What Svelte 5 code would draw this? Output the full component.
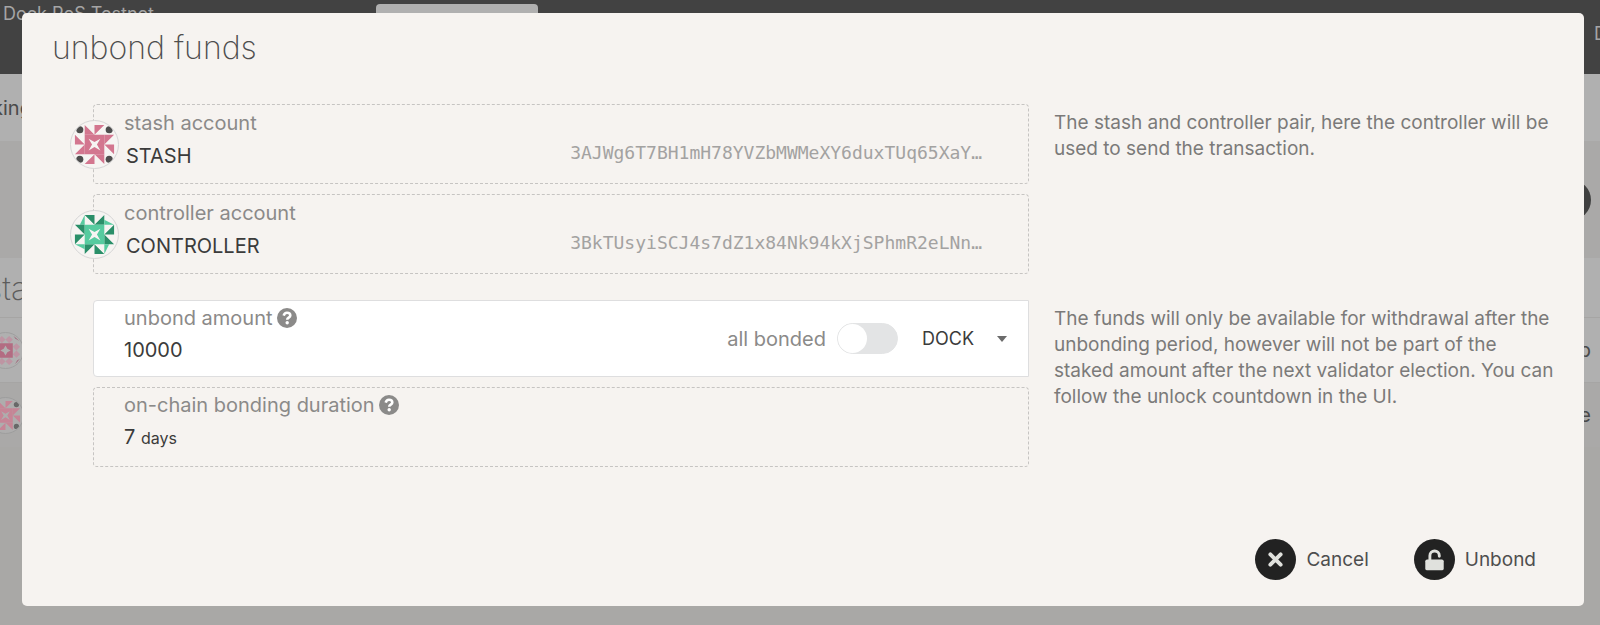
<script lang="ts">
  type Icon = 'pink' | 'green' | 'rose'
  type Account = { label: string; name: string; address: string; icon: Icon }

  const accounts: Account[] = [
    {
      label: 'stash account',
      name: 'STASH',
      address: '3AJWg6T7BH1mH78YVZbMWMeXY6duxTUq65XaY…',
      icon: 'pink',
    },
    {
      label: 'controller account',
      name: 'CONTROLLER',
      address: '3BkTUsyiSCJ4s7dZ1x84Nk94kXjSPhmR2eLNn…',
      icon: 'green',
    },
  ]

  const TURNS = [0, 90, 180, 270]
  const FILLS: Record<Icon, string> = { pink: '#d3768f', green: '#56cb9f', rose: '#b5506f' }

  let amount = $state('10000')
  let allBonded = $state(false)
  let unit = $state('DOCK')
</script>

{#snippet identicon(kind: Icon)}
  <svg class="identicon" viewBox="-4 -4 48 48" aria-hidden="true">
    {#each TURNS as turn}
      <g transform="rotate({turn} 20 20)">
        {#if kind === 'pink'}
          <path fill="#d3768f" d="M10 0v10h10zM20 0h10l-10 10z" />
          <ellipse cx="5" cy="5" rx="3.6" ry="3.6" fill="#4d4d4d" />
        {:else if kind === 'green'}
          <path fill="#2a8f69" d="M10 0h10v10zM30 0v10h-10z" />
          <path fill="#56cb9f" d="M10 0v10H5z" />
        {:else}
          <path fill="#c58a9e" d="M15 0l5 5l-5 5l-5-5zM25 0l5 5l-5 5l-5-5z" />
          <path fill="#8f1f45" d="M31 0l8 7l-5-3z" />
        {/if}
      </g>
    {/each}
    {#if kind === 'rose'}
      <path
        fill={FILLS[kind]}
        fill-rule="evenodd"
        d="M10 10h20v20h-20zM20 13L17.500 17.500L13 20L17.500 22.500L20 27L22.500 22.500L27 20L22.500 17.500z"
      />
    {:else}
      <path
        fill={FILLS[kind]}
        fill-rule="evenodd"
        d="M10 10h20v20h-20zM14 14L17.500 20L14 26L20 22.500L26 26L22.500 20L26 14L20 17.500z"
      />
    {/if}
  </svg>
{/snippet}

{#snippet help()}
  <svg class="help" viewBox="0 0 20 20" aria-hidden="true">
    <circle cx="10" cy="10" r="10" fill="#8b8a89" />
    <path
      d="M6.700 7.600C7.200 5.500 8.500 4.700 10 4.700c1.900 0 3.300 1.100 3.300 2.700 0 2.200-3.100 2.300-3.100 4.300"
      fill="none"
      stroke="#fff"
      stroke-width="2.600"
    />
    <circle cx="10.200" cy="14.800" r="1.700" fill="#fff" />
  </svg>
{/snippet}

<div class="page">
  <header class="topbar">
    <span class="chain">Dock PoS Testnet</span>
    <span class="tab"></span>
    <span class="menu">Developer</span>
  </header>
  <div class="subnav"><span>king</span></div>
  <div class="actions"><span class="dot"></span></div>
  <div class="stashes"><span>stashes</span></div>
  <div class="row">{@render identicon('rose')}<span>p</span></div>
  <div class="row alt">{@render identicon('pink')}<span>e</span></div>
</div>

<div class="modal" role="dialog" aria-labelledby="title">
  <h1 id="title">unbond funds</h1>

  <div class="columns">
    <div class="fields">
      {#each accounts as account}
        <div class="box account">
          {@render identicon(account.icon)}
          <div class="who">
            <span class="label">{account.label}</span>
            <span class="name">{account.name}</span>
          </div>
          <span class="address">{account.address}</span>
        </div>
      {/each}
    </div>
    <p>The stash and controller pair, here the controller will be used to send the transaction.</p>
  </div>

  <div class="columns">
    <div class="fields">
      <div class="box amount">
        <div class="entry">
          <label class="label" for="amount">unbond amount {@render help()}</label>
          <input id="amount" type="text" bind:value={amount} />
        </div>
        <label class="toggle">
          all bonded
          <input type="checkbox" bind:checked={allBonded} />
        </label>
        <div class="unit">
          <select aria-label="unit" bind:value={unit}>
            <option>DOCK</option>
          </select>
          <svg viewBox="0 0 10 6" aria-hidden="true"><path d="M0 0h10L5 6z" fill="#6b6b6b" /></svg>
        </div>
      </div>
      <div class="box duration">
        <span class="label">on-chain bonding duration {@render help()}</span>
        <span class="value">7 <small>days</small></span>
      </div>
    </div>
    <p>
      The funds will only be available for withdrawal after the unbonding period, however will not
      be part of the staked amount after the next validator election. You can follow the unlock
      countdown in the UI.
    </p>
  </div>

  <footer>
    <button type="button">
      <svg viewBox="0 0 40 40" aria-hidden="true">
        <circle cx="20" cy="20" r="20" fill="#222" />
        <path
          d="M15 15l10 10M25 15l-10 10"
          stroke="#e0e1dd"
          stroke-width="3.800"
          stroke-linecap="round"
        />
      </svg>
      Cancel
    </button>
    <button type="button">
      <svg viewBox="0 0 40 40" aria-hidden="true">
        <circle cx="20" cy="20" r="20" fill="#222" />
        <rect x="11" y="20" width="18" height="10.500" rx="1.800" fill="#e0e1dd" />
        <path
          d="M15.500 20.500v-4.200a4.600 4.600 0 0 1 9.200 0v.6"
          fill="none"
          stroke="#e0e1dd"
          stroke-width="2.800"
          stroke-linecap="round"
        />
      </svg>
      Unbond
    </button>
  </footer>
</div>

<style>
  :global(body) {
    background: #a9a8a6;
    color: #4e4e4e;
    font-family: Inter, Roboto, sans-serif;
    font-size: 20px;
    line-height: 26px;
    overflow: hidden;
  }

  .page {
    color: #4a4a4a;
  }

  .topbar {
    display: flex;
    align-items: flex-start;
    box-sizing: border-box;
    height: 74px;
    padding-top: 1px;
    background: #424242;
    color: #a5a5a5;
    font-size: 18px;
    white-space: nowrap;
    overflow: hidden;
  }

  .chain {
    flex: 0 0 373px;
    padding-left: 3px;
  }

  .tab {
    width: 162px;
    height: 70px;
    margin-top: 3px;
    border-radius: 4px 4px 0 0;
    background: #b0b0b0;
  }

  .menu {
    width: 6px;
    margin: 20px 0 0 auto;
  }

  .subnav {
    display: flex;
    align-items: center;
    height: 67px;
    background: #b0b0b0;
  }

  .subnav span {
    margin-left: -8px;
  }

  .actions {
    display: flex;
    align-items: center;
    justify-content: flex-end;
    height: 117px;
    padding-right: 9px;
    background: #aaa9a8;
  }

  .dot {
    width: 40px;
    height: 40px;
    border-radius: 50%;
    background: #404040;
  }

  .stashes {
    height: 59px;
    background: #b0b0b0;
    color: #5c5c5c;
    font-size: 32px;
    font-weight: 200;
    line-height: 62px;
    overflow: hidden;
  }

  .stashes span {
    margin-left: -14px;
  }

  .row {
    display: flex;
    align-items: center;
    justify-content: space-between;
    height: 64px;
    padding-right: 9px;
    border-top: 1px solid #a6a5a4;
    background: #b0b0b0;
  }

  .row.alt {
    background: #aaa9a8;
  }

  .row .identicon {
    width: 37px;
    height: 37px;
    margin-left: -13px;
    background: #b0b0b0;
    border-color: #999;
    opacity: 0.7;
  }

  .modal {
    position: absolute;
    inset: 13px 16px auto 22px;
    box-sizing: border-box;
    padding: 17px 26px 26px 30px;
    border-radius: 5px;
    background: #f6f3f0;
  }

  h1 {
    margin: 0 0 38px;
    font-size: 32px;
    font-weight: 200;
    line-height: 36px;
  }

  .columns {
    display: grid;
    grid-template-columns: 13fr 7fr;
    gap: 25px;
    margin: 0 0 26px 41px;
  }

  .fields {
    display: flex;
    flex-direction: column;
    gap: 10px;
    min-width: 0;
  }

  p {
    margin: 6px 0 0;
    color: #7b7a79;
    font-size: 19px;
  }

  .box {
    box-sizing: border-box;
    display: flex;
    height: 80px;
    padding: 4px 30px;
    border: 1px dashed #c6c4c2;
    border-radius: 4px;
  }

  .label {
    display: flex;
    align-items: center;
    gap: 4px;
    color: #8b8a89;
  }

  .account {
    align-items: center;
    padding: 0 46px 0 0;
  }

  .identicon {
    box-sizing: border-box;
    flex: none;
    width: 49px;
    height: 49px;
    margin-left: -24px;
    border: 1px solid #d6d6d6;
    border-radius: 50%;
    background: #f6f4f2;
  }

  .who {
    display: flex;
    flex-direction: column;
    gap: 7px;
    margin: 0 auto 9px 5px;
  }

  .name {
    padding-left: 2px;
    color: #3b3b3b;
  }

  .address {
    margin-top: 17px;
    color: #a3a2a1;
    font-family: 'DejaVu Sans Mono', monospace;
    font-size: 18px;
  }

  .amount {
    height: 77px;
    padding-right: 21px;
    border: 1px solid #dededf;
    border-radius: 4px 0 0 4px;
    background: #fff;
  }

  .entry {
    flex: 1;
    display: flex;
    flex-direction: column;
    gap: 6px;
    min-width: 0;
  }

  .entry input {
    padding: 0;
    border: 0;
    outline: 0;
    background: none;
    color: #3b3b3b;
    font: inherit;
  }

  .help {
    width: 20px;
    height: 20px;
  }

  .toggle {
    display: flex;
    align-items: center;
    gap: 11px;
    color: #8b8a89;
  }

  .toggle input {
    appearance: none;
    width: 61px;
    height: 31px;
    margin: 0;
    border: 1px solid #e3e4e5;
    border-radius: 16px;
    background: #e3e4e5;
  }

  .toggle input::before {
    content: '';
    display: block;
    width: 29px;
    height: 29px;
    border-radius: 50%;
    background: #fff;
  }

  .toggle input:checked::before {
    margin-left: auto;
  }

  .unit {
    display: flex;
    align-items: center;
    gap: 23px;
    margin-left: 24px;
  }

  .unit select {
    appearance: none;
    padding: 0;
    border: 0;
    background: none;
    color: #3b3b3b;
    font: inherit;
    font-size: 18px;
  }

  .unit svg {
    width: 10px;
    height: 6px;
  }

  .duration {
    flex-direction: column;
    gap: 6px;
  }

  .value {
    color: #3b3b3b;
  }

  small {
    font-size: 16px;
  }

  footer {
    display: flex;
    justify-content: flex-end;
    gap: 45px;
    padding: 46px 22px 0 0;
  }

  button {
    display: flex;
    align-items: center;
    gap: 10px;
    padding: 0;
    border: 0;
    background: none;
    color: #4e4e4e;
    font: inherit;
    font-size: 19px;
  }

  button svg {
    width: 41px;
    height: 41px;
  }
</style>
